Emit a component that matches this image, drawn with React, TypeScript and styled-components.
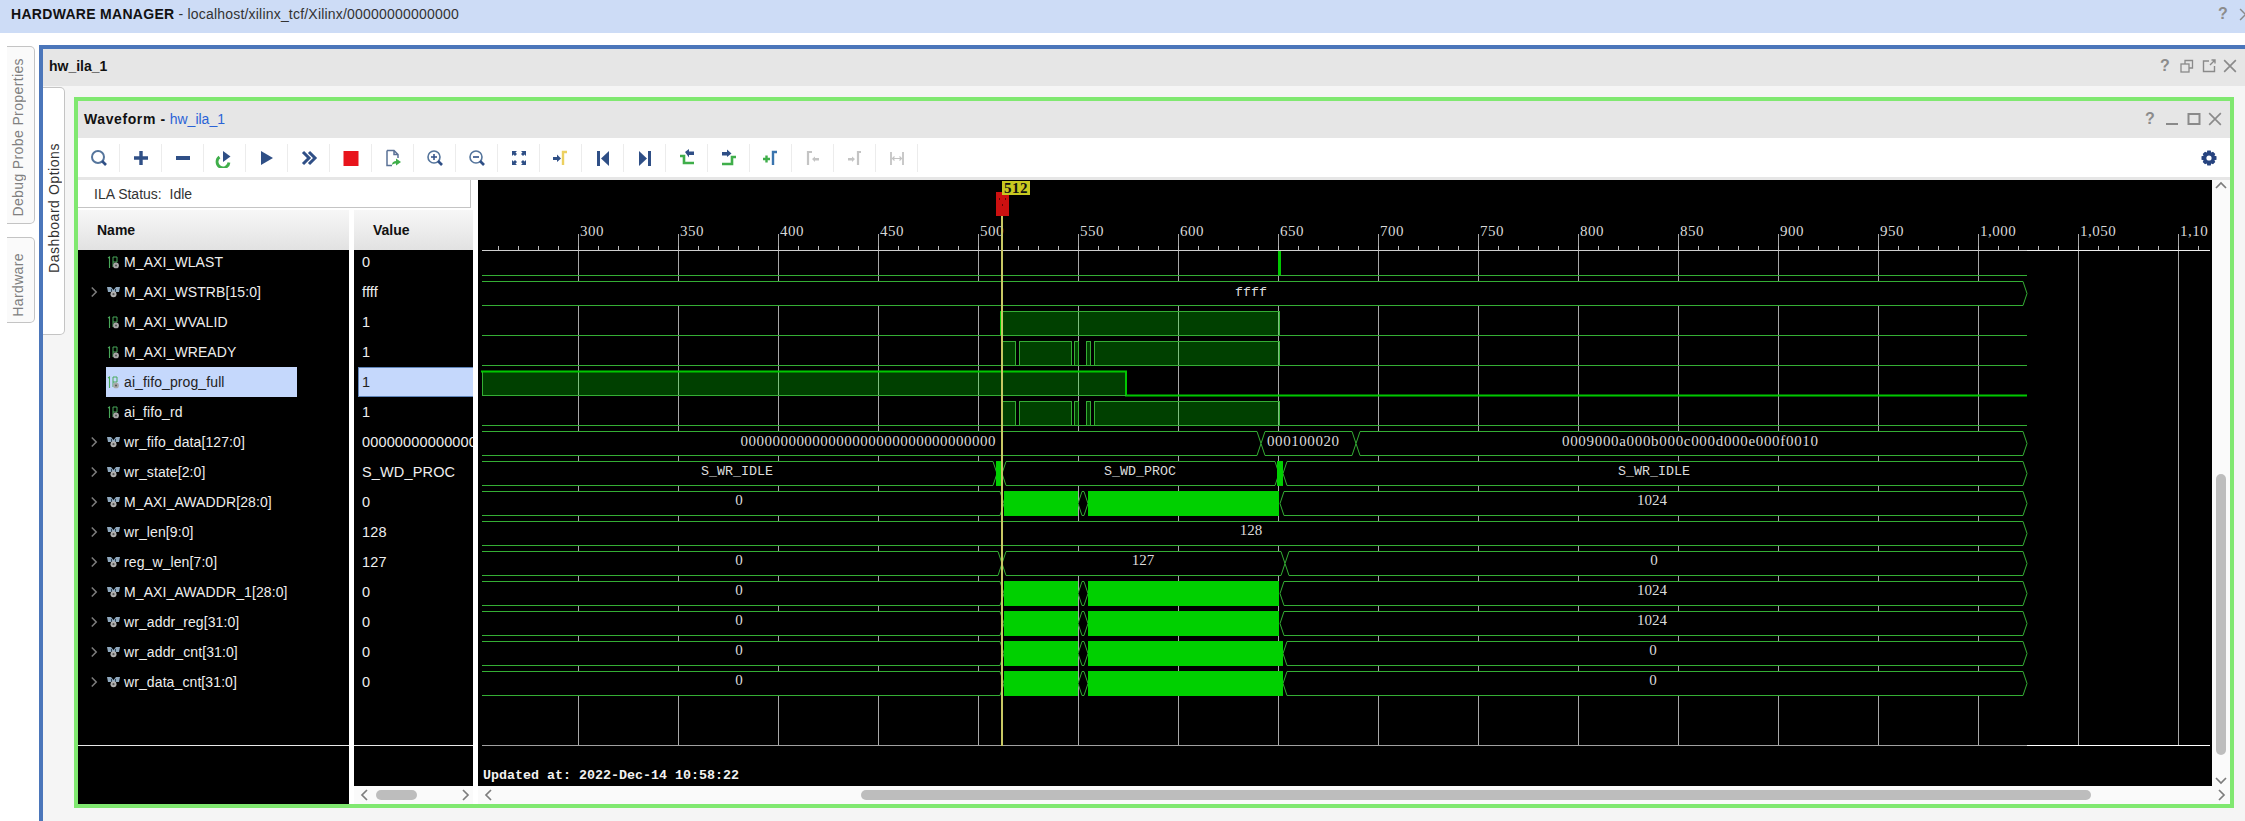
import React from 'react'
import styled, { createGlobalStyle } from 'styled-components'

const GlobalStyle = createGlobalStyle`
html, body {
  margin: 0;
  padding: 0;
  background: #fff;
  overflow: hidden;
}
#root {
  width: 2245px;
  height: 821px;
}
* {
  box-sizing: border-box;
}
`

const Page = styled.div`
width: 2245px;
height: 821px;
display: flex;
flex-direction: column;
font-family: "Liberation Sans", Arial, sans-serif;
font-size: 14px;
color: #222;
background: #fff;
overflow: hidden;
`

const TopBar = styled.div`
height: 33px;
flex: none;
background: #cddcf6;
display: flex;
align-items: center;
padding: 0 0 5px 11px;
margin-bottom: 12px;
color: #333;
`

const TopTitle = styled.strong`
color: #111;
letter-spacing: 0.3px;
margin-right: 4px;
`

const TopPath = styled.span`
letter-spacing: 0.2px;
`

const TopButtons = styled.div`
margin-left: auto;
margin-right: -7px;
display: flex;
align-items: center;
gap: 8px;
`

const Workspace = styled.div`
flex: 1;
display: flex;
min-height: 0;
`

const SideTabs = styled.div`
width: 39px;
flex: none;
display: flex;
flex-direction: column;
align-items: flex-start;
padding-left: 7px;
gap: 13px;
margin-top: 1px;
`

const VerticalTab = styled.div<{ $h: number; $pad: number }>`
width: 28px;
height: ${p => p.$h}px;
border: 1px solid #c4c4c4;
border-left: none;
border-radius: 0 5px 5px 0;
background: #fafafa;
display: flex;
flex-direction: column;
justify-content: flex-end;
align-items: center;
padding-right: 6px;
padding-bottom: ${p => p.$pad}px;
`

const VerticalLabel = styled.span<{ $active?: boolean }>`
writing-mode: vertical-rl;
transform: rotate(180deg);
white-space: nowrap;
letter-spacing: ${p => (p.$active ? 0.55 : 0.38)}px;
color: ${p => (p.$active ? '#333' : '#808080')};
font-size: 14px;
`

const IlaWindow = styled.div`
flex: 1;
min-width: 0;
display: flex;
flex-direction: column;
border-top: 4px solid #4b76ba;
border-left: 4px solid #4b76ba;
background: #f5f5f5;
`

const WindowHeader = styled.div`
height: 37px;
flex: none;
display: flex;
align-items: center;
padding: 0 8px 3px 6px;
background: #e6e6e6;
font-weight: bold;
color: #111;
`

const HeaderButtons = styled.div`
margin-left: auto;
display: flex;
align-items: center;
gap: 6px;
letter-spacing: 0;
`

const HelpMark = styled.span`
width: 16px;
text-align: center;
font-size: 16px;
font-weight: bold;
color: #8c8c8c;
`

const WindowBody = styled.div`
flex: 1;
min-height: 0;
display: flex;
padding: 1px 11px 13px 0;
`

const DashTab = styled(VerticalTab)`
width: 22px;
height: 248px;
background: #fff;
flex: none;
margin-right: 9px;
padding-right: 0;
padding-bottom: 61px;
`

const GreenPanel = styled.div`
flex: 1;
min-width: 0;
margin-top: 10px;
display: flex;
flex-direction: column;
border: 4px solid #80e870;
background: #fff;
`

const PanelHeader = styled.div`
height: 37px;
flex: none;
display: flex;
align-items: center;
padding: 0 8px 2px 6px;
background: #e6e6e6;
font-weight: bold;
letter-spacing: 0.6px;
color: #111;
`

const HeaderLink = styled.span`
font-weight: normal;
letter-spacing: 0;
color: #2a63d6;
margin-left: 4px;
`

const Toolbar = styled.div`
height: 39px;
flex: none;
display: flex;
align-items: center;
padding-right: 13px;
background: #fff;
`

const ToolSlot = styled.div`
width: 42px;
height: 28px;
flex: none;
display: flex;
align-items: center;
justify-content: center;
border-right: 1px solid #ececec;
`

const GearSlot = styled.div`
margin-left: auto;
display: flex;
align-items: center;
`

const ToolbarRule = styled.div`
height: 3px;
flex: none;
background: #e6e6e6;
`

const Main = styled.div`
flex: 1;
min-height: 0;
display: flex;
background: #fff;
`

const LeftColumn = styled.div`
width: 395px;
flex: none;
display: flex;
flex-direction: column;
margin-right: 5px;
`

const StatusBox = styled.div`
height: 28px;
width: 393px;
flex: none;
display: flex;
align-items: center;
padding-left: 16px;
border: 1px solid #c4c4c4;
border-top: none;
border-left: none;
margin-bottom: 2px;
color: #333;
white-space: pre;
`

const TableColumns = styled.div`
flex: 1;
min-height: 0;
display: flex;
gap: 5px;
`

const TableColumn = styled.div<{ $w: number }>`
width: ${p => p.$w}px;
flex: none;
display: flex;
flex-direction: column;
background: #000;
`

const ColumnHeader = styled.div<{ $pad: number }>`
height: 40px;
flex: none;
position: relative;
z-index: 1;
display: flex;
align-items: center;
padding-left: ${p => p.$pad}px;
font-weight: bold;
color: #111;
background: linear-gradient(#f7f7f7, #e2e2e2);
`

const RowList = styled.div`
height: 496px;
flex: none;
overflow: hidden;
border-bottom: 1px solid #e8e8e8;
`

const RowStack = styled.div`
margin-top: -3px;
`

const NameRow = styled.div`
height: 30px;
display: flex;
align-items: center;
`

const ChevronSlot = styled.div`
width: 28px;
flex: none;
padding-left: 12px;
display: flex;
align-items: center;
`

const NameCell = styled.div<{ $selected?: boolean }>`
width: 191px;
height: 30px;
display: flex;
align-items: center;
gap: 4px;
padding-left: 1px;
white-space: nowrap;
letter-spacing: 0.1px;
color: ${p => (p.$selected ? '#222' : '#eee')};
background: ${p => (p.$selected ? '#c5d8fc' : 'transparent')};
`

const ValueRow = styled.div<{ $selected?: boolean }>`
height: 30px;
margin-left: 4px;
display: flex;
align-items: center;
white-space: nowrap;
overflow: hidden;
font-size: 14.5px;
letter-spacing: 0.15px;
color: ${p => (p.$selected ? '#222' : '#eee')};
background: ${p => (p.$selected ? '#c5d8fc' : 'transparent')};
border: ${p => (p.$selected ? '1px solid #5f84b8' : 'none')};
border-right: none;
padding-left: ${p => (p.$selected ? 3 : 4)}px;
`

const ColumnFooter = styled.div`
flex: 1;
background: #000;
`

const HScroll = styled.div`
height: 18px;
flex: none;
display: flex;
align-items: center;
background: #fafafa;
`

const ArrowSlot = styled.div<{ $w: number }>`
width: ${p => p.$w}px;
flex: none;
display: flex;
align-items: center;
justify-content: center;
`

const HThumb = styled.div<{ $left: number; $w: number }>`
margin-left: ${p => p.$left}px;
margin-right: auto;
width: ${p => p.$w}px;
height: 10px;
border-radius: 5px;
background: #bdbdbd;
`

const WaveColumn = styled.div`
flex: 1;
min-width: 0;
display: flex;
flex-direction: column;
`

const WaveRow = styled.div`
flex: 1;
min-height: 0;
display: flex;
`

const WaveCanvas = styled.svg`
width: 1734px;
height: 606px;
flex: none;
display: block;
background: #000;
`

const VScroll = styled.div`
width: 18px;
flex: none;
display: flex;
flex-direction: column;
align-items: center;
background: #fafafa;
`

const VThumb = styled.div`
margin-top: 282px;
margin-bottom: auto;
width: 10px;
height: 281px;
border-radius: 5px;
background: #bdbdbd;
`

const RulerText = styled.text`
font-family: "Liberation Serif", serif;
font-size: 15px;
letter-spacing: 0.5px;
fill: #d8d8d8;
`

const NumText = styled.text`
font-family: "Liberation Serif", serif;
font-size: 15px;
fill: #dcdcdc;
text-anchor: middle;
`

const WordText = styled.text`
font-family: "Liberation Mono", monospace;
font-size: 13.33px;
fill: #dcdcdc;
text-anchor: middle;
`

const StampText = styled.text`
font-family: "Liberation Mono", monospace;
font-size: 13.33px;
font-weight: bold;
fill: #f2f2f2;
`

const TagText = styled.text`
font-family: "Liberation Serif", serif;
font-size: 15px;
font-weight: bold;
letter-spacing: 0.5px;
fill: #111;
`

// ---------- small icons ----------

const NAVY = '#2f4f86'
const GREEN = '#3fae4a'
const OFF = '#c4c4c4'

const Close = ({ size = 13, color = '#8a8a8a' }: { size?: number; color?: string }) => (
  <svg width={size} height={size} viewBox="0 0 12 12">
    <path d="M1 1 L11 11 M11 1 L1 11" stroke={color} strokeWidth="1.4" />
  </svg>
)

const Restore = () => (
  <svg width="16" height="16" viewBox="0 0 16 16" fill="none" stroke="#8a8a8a" strokeWidth="1.3">
    <rect x="2" y="6" width="8" height="8" />
    <path d="M6 6 V2.5 H13.5 V10 H10" />
  </svg>
)

const Float = () => (
  <svg width="16" height="16" viewBox="0 0 16 16" fill="none" stroke="#8a8a8a" strokeWidth="1.4">
    <path d="M8 3 H2.5 V13.5 H13.5 V8" />
    <path d="M9 7 L14 2 M10.5 2 H14 V5.5" />
  </svg>
)

const Minimize = () => (
  <svg width="16" height="16" viewBox="0 0 16 16">
    <rect x="2" y="12" width="12" height="2" fill="#8a8a8a" />
  </svg>
)

const Maximize = () => (
  <svg width="16" height="16" viewBox="0 0 16 16" fill="none" stroke="#8a8a8a" strokeWidth="2">
    <rect x="2.5" y="3" width="11" height="10" />
  </svg>
)

const Tool = ({ children }: { children: React.ReactNode }) => (
  <svg width="20" height="20" viewBox="0 0 20 20" fill="none">{children}</svg>
)

const StepLeftBar = ({ color }: { color: string }) => (
  <path d="M12 17 V4 H16" stroke={color} strokeWidth="2.4" />
)

const toolIcons: React.ReactNode[] = [
  <Tool>
    <circle cx="9" cy="9" r="6" stroke="#55759c" strokeWidth="2" />
    <path d="M13 13 L17 17" stroke={NAVY} strokeWidth="2.6" />
  </Tool>,
  <Tool><path d="M10 3 V17 M3 10 H17" stroke={NAVY} strokeWidth="3.4" /></Tool>,
  <Tool><rect x="3" y="8" width="14" height="4" fill={NAVY} /></Tool>,
  <Tool>
    <path d="M4.5 9 A6 6 0 1 0 14 14.5" stroke={GREEN} strokeWidth="2.8" />
    <polygon points="8,3 15.5,8.5 8,14" fill={NAVY} />
  </Tool>,
  <Tool><polygon points="4,3 16,10 4,17" fill={NAVY} /></Tool>,
  <Tool><path d="M4 4 L10 10 L4 16 M10 4 L16 10 L10 16" stroke={NAVY} strokeWidth="3" /></Tool>,
  <Tool><rect x="2.5" y="3" width="15" height="15" fill="#e8141c" /></Tool>,
  <Tool>
    <path d="M4 2.5 H11 L15 6.5 V10 M4 2.5 V17.5 H9 M11 2.5 V6.5 H15" stroke="#5a7196" strokeWidth="1.5" />
    <path d="M9 17 C9 14 11 13 13 13 V10.5 L18 14 L13 17.5 V15.5 C11.5 15.5 10 16 9 17 Z" fill={GREEN} />
  </Tool>,
  <Tool>
    <circle cx="9" cy="9" r="6" stroke="#55759c" strokeWidth="1.6" />
    <path d="M6 9 H12 M9 6 V12" stroke={NAVY} strokeWidth="1.5" />
    <path d="M13 13 L17 17" stroke={NAVY} strokeWidth="2.6" />
  </Tool>,
  <Tool>
    <circle cx="9" cy="9" r="6" stroke="#55759c" strokeWidth="1.6" />
    <path d="M6 9 H12" stroke={NAVY} strokeWidth="1.6" />
    <path d="M13 13 L17 17" stroke={NAVY} strokeWidth="2.6" />
  </Tool>,
  <Tool>
    <path d="M3 3 H8 L6.5 4.5 L8 6 L6 8 L4.5 6.5 L3 8 Z M17 3 H12 L13.5 4.5 L12 6 L14 8 L15.5 6.5 L17 8 Z M3 17 H8 L6.5 15.5 L8 14 L6 12 L4.5 13.5 L3 12 Z M17 17 H12 L13.5 15.5 L12 14 L14 12 L15.5 13.5 L17 12 Z" fill={NAVY} />
  </Tool>,
  <Tool>
    <path d="M2 9 H6 V6.5 L10 10.5 L6 14 V12 H2 Z" fill={NAVY} />
    <StepLeftBar color="#ecd060" />
  </Tool>,
  <Tool>
    <rect x="4" y="3" width="3" height="15" fill={NAVY} />
    <polygon points="16,3 8,10.5 16,18" fill={NAVY} />
  </Tool>,
  <Tool>
    <rect x="13" y="3" width="3" height="15" fill={NAVY} />
    <polygon points="4,3 12,10.5 4,18" fill={NAVY} />
  </Tool>,
  <Tool>
    <path d="M8 4 L12 1 V3.5 H17 V7 H12 V9.5 Z" fill={NAVY} />
    <path d="M3 8 H7 V15 H17" stroke={GREEN} strokeWidth="2.6" />
  </Tool>,
  <Tool>
    <path d="M3 4 H8 V1.5 L12.5 5.5 L8 9 V7.5 H3 Z" fill={NAVY} />
    <path d="M17 9 H13 V16 H3" stroke={GREEN} strokeWidth="2.6" />
  </Tool>,
  <Tool>
    <path d="M2 11 H9 M5.5 7.5 V14.5" stroke={GREEN} strokeWidth="2.4" />
    <path d="M12 17 V4 H16" stroke="#3a74ae" strokeWidth="2.4" />
  </Tool>,
  <Tool>
    <path d="M5 17 V4 H9" stroke={OFF} strokeWidth="2.2" />
    <path d="M9 11 L12 8.5 V10 H16 V12.5 H12 V14 Z" fill={OFF} />
  </Tool>,
  <Tool>
    <path d="M3 10 H7 V8.5 L10 11 L7 14 V12.5 H3 Z" fill={OFF} />
    <path d="M13 17 V4 H16" stroke={OFF} strokeWidth="2.2" />
  </Tool>,
  <Tool>
    <path d="M4 4 V17 M16 4 V17" stroke={OFF} strokeWidth="1.8" />
    <path d="M5 10.5 H15 M7.5 8.5 L5.5 10.5 L7.5 12.5 M12.5 8.5 L14.5 10.5 L12.5 12.5" stroke={OFF} strokeWidth="1.2" />
  </Tool>,
]

const Gear = () => (
  <svg width="16" height="16" viewBox="0 0 16 16">
    <path d="M6.3 0.5 H9.7 L10.2 2.6 L12 1.7 L14.3 4 L13.4 5.8 L15.5 6.3 V9.7 L13.4 10.2 L14.3 12 L12 14.3 L10.2 13.4 L9.7 15.5 H6.3 L5.8 13.4 L4 14.3 L1.7 12 L2.6 10.2 L0.5 9.7 V6.3 L2.6 5.8 L1.7 4 L4 1.7 L5.8 2.6 Z" fill="#26437f" />
    <circle cx="8" cy="8" r="2.6" fill="#fff" />
  </svg>
)

const Chevron = ({ dir, color = '#7d7d7d', w = 8 }: { dir: 'up' | 'down' | 'left' | 'right'; color?: string; w?: number }) => {
  const d = {
    right: 'M2 1 L7 6 L2 11',
    left: 'M7 1 L2 6 L7 11',
    up: 'M1 8 L6 3 L11 8',
    down: 'M1 4 L6 9 L11 4',
  }[dir]
  const horizontal = dir === 'left' || dir === 'right'
  return (
    <svg width={horizontal ? w : 12} height="12" viewBox={horizontal ? '0 0 9 12' : '0 0 12 12'} fill="none">
      <path d={d} stroke={color} strokeWidth="1.7" />
    </svg>
  )
}

const BitIcon = () => (
  <svg width="13" height="13" viewBox="0 0 13 13" style={{ flex: 'none' }} fill="none">
    <path d="M1 2 L2.5 1 V12" stroke="#49a85a" strokeWidth="1.1" />
    <path d="M6 1 H10 V6 H6 Z M6 6 V11" stroke="#49a85a" strokeWidth="1" />
    <circle cx="9" cy="9.4" r="2.9" fill="#a8a8a8" />
    <circle cx="9" cy="9.4" r="1" fill="#555" />
  </svg>
)

const BusIcon = () => (
  <svg width="13" height="13" viewBox="0 0 13 13" style={{ flex: 'none' }}>
    <path d="M0 1 H4 L6.5 4 L9 1 H13 L12 6 H9 V9 H4 V6 H1 Z" fill="#8fa9bf" />
    <path d="M4 3 H5 V6 H4 Z M8 3 H9 V6 H8 Z" fill="#345" />
    <circle cx="6.5" cy="8.2" r="3" fill="#b0b0b0" />
    <circle cx="6.5" cy="8.2" r="1.1" fill="#555" />
  </svg>
)

// ---------- signal table ----------

type Signal = { name: string; value: string; bus?: boolean; selected?: boolean }

const signals: Signal[] = [
  { name: 'M_AXI_WLAST', value: '0' },
  { name: 'M_AXI_WSTRB[15:0]', value: 'ffff', bus: true },
  { name: 'M_AXI_WVALID', value: '1' },
  { name: 'M_AXI_WREADY', value: '1' },
  { name: 'ai_fifo_prog_full', value: '1', selected: true },
  { name: 'ai_fifo_rd', value: '1' },
  { name: 'wr_fifo_data[127:0]', value: '00000000000000000000000000000000', bus: true },
  { name: 'wr_state[2:0]', value: 'S_WD_PROC', bus: true },
  { name: 'M_AXI_AWADDR[28:0]', value: '0', bus: true },
  { name: 'wr_len[9:0]', value: '128', bus: true },
  { name: 'reg_w_len[7:0]', value: '127', bus: true },
  { name: 'M_AXI_AWADDR_1[28:0]', value: '0', bus: true },
  { name: 'wr_addr_reg[31:0]', value: '0', bus: true },
  { name: 'wr_addr_cnt[31:0]', value: '0', bus: true },
  { name: 'wr_data_cnt[31:0]', value: '0', bus: true },
]

// ---------- waveform drawing (page coordinates, see the viewBox) ----------

const RAIL = '#34ae34'
const BRIGHT = '#00c800'
const SOLID = '#00d000'
const LEFT = 482
const RIGHT = 2027
const rowTop = (k: number) => 251 + k * 30

// one value of a bus: pointed at both ends, black inside so that it hides the grid
const Bus = ({ row, x0, x1 }: { row: number; x0: number; x1: number }) => {
  const t = rowTop(row) + 0.5
  const b = t + 24
  const m = t + 12
  return (
    <path
      d={`M${x0} ${m} L${x0 + 4} ${t} H${x1 - 4} L${x1} ${m} L${x1 - 4} ${b} H${x0 + 4} Z`}
      fill="#000"
      stroke={RAIL}
    />
  )
}

const LeftOpenBus = ({ row, x1 }: { row: number; x1: number }) => {
  const t = rowTop(row) + 0.5
  return (
    <>
      <path d={`M${LEFT} ${t} H${x1 - 4} L${x1} ${t + 12} L${x1 - 4} ${t + 24} H${LEFT} Z`} fill="#000" />
      <path d={`M${LEFT} ${t} H${x1 - 4} L${x1} ${t + 12} L${x1 - 4} ${t + 24} H${LEFT}`} fill="none" stroke={RAIL} />
    </>
  )
}

const Solid = ({ row, x0, x1 }: { row: number; x0: number; x1: number }) => (
  <rect x={x0} y={rowTop(row)} width={x1 - x0} height="25" fill={SOLID} />
)

const Busy = ({ row, x0, x1 }: { row: number; x0: number; x1: number }) => (
  <rect x={x0 + 0.5} y={rowTop(row) + 0.5} width={x1 - x0} height="24" fill="rgba(0,255,0,0.25)" stroke={RAIL} />
)

const pulses: [number, number][] = [[1002, 1015], [1019, 1071], [1074, 1078], [1086, 1090], [1094, 1279]]
const ticks = Array.from({ length: 87 }, (_, i) => 498 + i * 20)
const majors = Array.from({ length: 17 }, (_, i) => 578 + i * 100)
const labels = ['300', '350', '400', '450', '500', '550', '600', '650', '700', '750', '800', '850', '900', '950', '1,000', '1,050', '1,10']
const grouped = [8, 11, 12]
const counters = [13, 14]

const Waveforms = () => (
  <WaveCanvas viewBox="478 180 1734 606">
    {majors.map(x => (
      <line key={x} x1={x + 0.5} x2={x + 0.5} y1="234" y2="745" stroke="#a8a8a8" />
    ))}
    {ticks.map(x => (
      <line key={x} x1={x + 0.5} x2={x + 0.5} y1="246" y2="250" stroke="#bbb" />
    ))}
    <line x1={LEFT} x2={RIGHT} y1="250.5" y2="250.5" stroke="#cfcfcf" />
    <line x1={RIGHT} x2="2210" y1="250.5" y2="250.5" stroke="#eee" />
    <line x1={LEFT} x2={RIGHT} y1="745.5" y2="745.5" stroke="#a0a0a0" />
    <line x1={RIGHT} x2="2210" y1="745.5" y2="745.5" stroke="#fff" />
    {labels.map((text, i) => (
      <RulerText key={text} x={580 + i * 100} y="236">{text}</RulerText>
    ))}

    {/* M_AXI_WLAST */}
    <line x1={LEFT} x2={RIGHT} y1="275.5" y2="275.5" stroke={RAIL} />
    <rect x="1278" y="251" width="3" height="24" fill={BRIGHT} />

    {/* M_AXI_WSTRB */}
    <LeftOpenBus row={1} x1={RIGHT} />
    <WordText x="1251" y="296">ffff</WordText>

    {/* M_AXI_WVALID */}
    <line x1={LEFT} x2={RIGHT} y1="335.5" y2="335.5" stroke={RAIL} />
    <Busy row={2} x0={1001} x1={1279} />
    <rect x="1000" y="311" width="2" height="24" fill={BRIGHT} />

    {/* M_AXI_WREADY and ai_fifo_rd */}
    {[3, 5].map(row => (
      <g key={row}>
        <line x1={LEFT} x2={RIGHT} y1={rowTop(row) + 24.5} y2={rowTop(row) + 24.5} stroke={RAIL} />
        {pulses.map(([a, b]) => <Busy key={a} row={row} x0={a} x1={b} />)}
      </g>
    ))}

    {/* ai_fifo_prog_full */}
    <rect x={LEFT} y="371" width={1126 - LEFT} height="24" fill="rgba(0,255,0,0.25)" />
    <path d={`M${LEFT + 0.5} 395 V371`} stroke={RAIL} />
    <path d={`M${LEFT - 1} 371.5 H1126 V395.5 H${RIGHT}`} fill="none" stroke={BRIGHT} strokeWidth="2" />
    <path d={`M${LEFT} 395.5 H1126`} fill="none" stroke={RAIL} />

    {/* wr_fifo_data */}
    <LeftOpenBus row={6} x1={1261} />
    <Bus row={6} x0={1261} x1={1356} />
    <Bus row={6} x0={1356} x1={RIGHT} />
    <NumText x="868" y="446" textLength="255">00000000000000000000000000000000</NumText>
    <NumText x="1303" y="446" textLength="72">000100020</NumText>
    <NumText x="1690" y="446" textLength="256">0009000a000b000c000d000e000f0010</NumText>

    {/* wr_state */}
    <LeftOpenBus row={7} x1={997} />
    <Bus row={7} x0={1002} x1={1279} />
    <Bus row={7} x0={1283} x1={RIGHT} />
    <Solid row={7} x0={996} x1={1002} />
    <Solid row={7} x0={1277} x1={1283} />
    <WordText x="737" y="475">S_WR_IDLE</WordText>
    <WordText x="1140" y="475">S_WD_PROC</WordText>
    <WordText x="1654" y="475">S_WR_IDLE</WordText>

    {/* wr_len */}
    <LeftOpenBus row={9} x1={RIGHT} />
    <NumText x="1251" y="535">128</NumText>

    {/* reg_w_len */}
    <LeftOpenBus row={10} x1={1002} />
    <Bus row={10} x0={1002} x1={1285} />
    <Bus row={10} x0={1285} x1={RIGHT} />
    <NumText x="739" y="565">0</NumText>
    <NumText x="1143" y="565">127</NumText>
    <NumText x="1654" y="565">0</NumText>

    {/* address buses, all with the same burst */}
    {grouped.map(row => (
      <g key={row}>
        <LeftOpenBus row={row} x1={1004} />
        <Bus row={row} x0={1078} x1={1088} />
        <Bus row={row} x0={1280} x1={RIGHT} />
        <Solid row={row} x0={1004} x1={1078} />
        <Solid row={row} x0={1088} x1={1279} />
        <NumText x="739" y={rowTop(row) + 14}>0</NumText>
        <NumText x="1652" y={rowTop(row) + 14}>1024</NumText>
      </g>
    ))}
    {counters.map(row => (
      <g key={row}>
        <LeftOpenBus row={row} x1={1004} />
        <Bus row={row} x0={1078} x1={1088} />
        <Bus row={row} x0={1283} x1={RIGHT} />
        <Solid row={row} x0={1004} x1={1078} />
        <Solid row={row} x0={1088} x1={1283} />
        <NumText x="739" y={rowTop(row) + 14}>0</NumText>
        <NumText x="1653" y={rowTop(row) + 14}>0</NumText>
      </g>
    ))}

    {/* cursor */}
    <rect x="1001" y="194" width="2" height="552" fill="#c8c864" />
    <rect x="996" y="192" width="13" height="24" fill="#cc1010" />
    <path d="M999 199 H1000 M1005 199 H1006 M1002 205 H1003" stroke="#400" strokeWidth="1.5" />
    <rect x="1002" y="181" width="28" height="14" fill="#c8c820" />
    <TagText x="1004" y="193">512</TagText>

    <StampText x="483" y="779">Updated at: 2022-Dec-14 10:58:22</StampText>
  </WaveCanvas>
)

export default function App() {
  return (
    <Page>
      <GlobalStyle />
      <TopBar>
        <TopTitle>HARDWARE MANAGER</TopTitle>
        <TopPath>- localhost/xilinx_tcf/Xilinx/00000000000000</TopPath>
        <TopButtons>
          <HelpMark>?</HelpMark>
          <Close />
        </TopButtons>
      </TopBar>
      <Workspace>
        <SideTabs>
          <VerticalTab $h={178} $pad={6}>
            <VerticalLabel>Debug Probe Properties</VerticalLabel>
          </VerticalTab>
          <VerticalTab $h={86} $pad={5}>
            <VerticalLabel>Hardware</VerticalLabel>
          </VerticalTab>
        </SideTabs>
        <IlaWindow>
          <WindowHeader>
            hw_ila_1
            <HeaderButtons>
              <HelpMark>?</HelpMark>
              <Restore />
              <Float />
              <Close size={14} />
            </HeaderButtons>
          </WindowHeader>
          <WindowBody>
            <DashTab $h={248} $pad={61}>
              <VerticalLabel $active>Dashboard Options</VerticalLabel>
            </DashTab>
            <GreenPanel>
              <PanelHeader>
                Waveform -<HeaderLink>hw_ila_1</HeaderLink>
                <HeaderButtons>
                  <HelpMark>?</HelpMark>
                  <Minimize />
                  <Maximize />
                  <Close size={14} />
                </HeaderButtons>
              </PanelHeader>
              <Toolbar>
                {toolIcons.map((icon, i) => (
                  <ToolSlot key={i}>{icon}</ToolSlot>
                ))}
                <GearSlot><Gear /></GearSlot>
              </Toolbar>
              <ToolbarRule />
              <Main>
                <LeftColumn>
                  <StatusBox>ILA Status:  Idle</StatusBox>
                  <TableColumns>
                    <TableColumn $w={271}>
                      <ColumnHeader $pad={19}>Name</ColumnHeader>
                      <RowList>
                        <RowStack>
                          {signals.map(s => (
                            <NameRow key={s.name}>
                              <ChevronSlot>{s.bus && <Chevron dir="right" />}</ChevronSlot>
                              <NameCell $selected={s.selected}>
                                {s.bus ? <BusIcon /> : <BitIcon />}
                                {s.name}
                              </NameCell>
                            </NameRow>
                          ))}
                        </RowStack>
                      </RowList>
                      <ColumnFooter />
                    </TableColumn>
                    <TableColumn $w={119}>
                      <ColumnHeader $pad={19}>Value</ColumnHeader>
                      <RowList>
                        <RowStack>
                          {signals.map(s => (
                            <ValueRow key={s.name} $selected={s.selected}>{s.value}</ValueRow>
                          ))}
                        </RowStack>
                      </RowList>
                      <ColumnFooter />
                      <HScroll>
                        <ArrowSlot $w={20}><Chevron dir="left" w={9} /></ArrowSlot>
                        <HThumb $left={2} $w={41} />
                        <ArrowSlot $w={16}><Chevron dir="right" w={9} /></ArrowSlot>
                      </HScroll>
                    </TableColumn>
                  </TableColumns>
                </LeftColumn>
                <WaveColumn>
                  <WaveRow>
                    <Waveforms />
                    <VScroll>
                      <ArrowSlot $w={18}><Chevron dir="up" /></ArrowSlot>
                      <VThumb />
                      <ArrowSlot $w={18}><Chevron dir="down" /></ArrowSlot>
                    </VScroll>
                  </WaveRow>
                  <HScroll>
                    <ArrowSlot $w={20}><Chevron dir="left" w={9} /></ArrowSlot>
                    <HThumb $left={363} $w={1230} />
                    <ArrowSlot $w={18}><Chevron dir="right" w={9} /></ArrowSlot>
                  </HScroll>
                </WaveColumn>
              </Main>
            </GreenPanel>
          </WindowBody>
        </IlaWindow>
      </Workspace>
    </Page>
  )
}
